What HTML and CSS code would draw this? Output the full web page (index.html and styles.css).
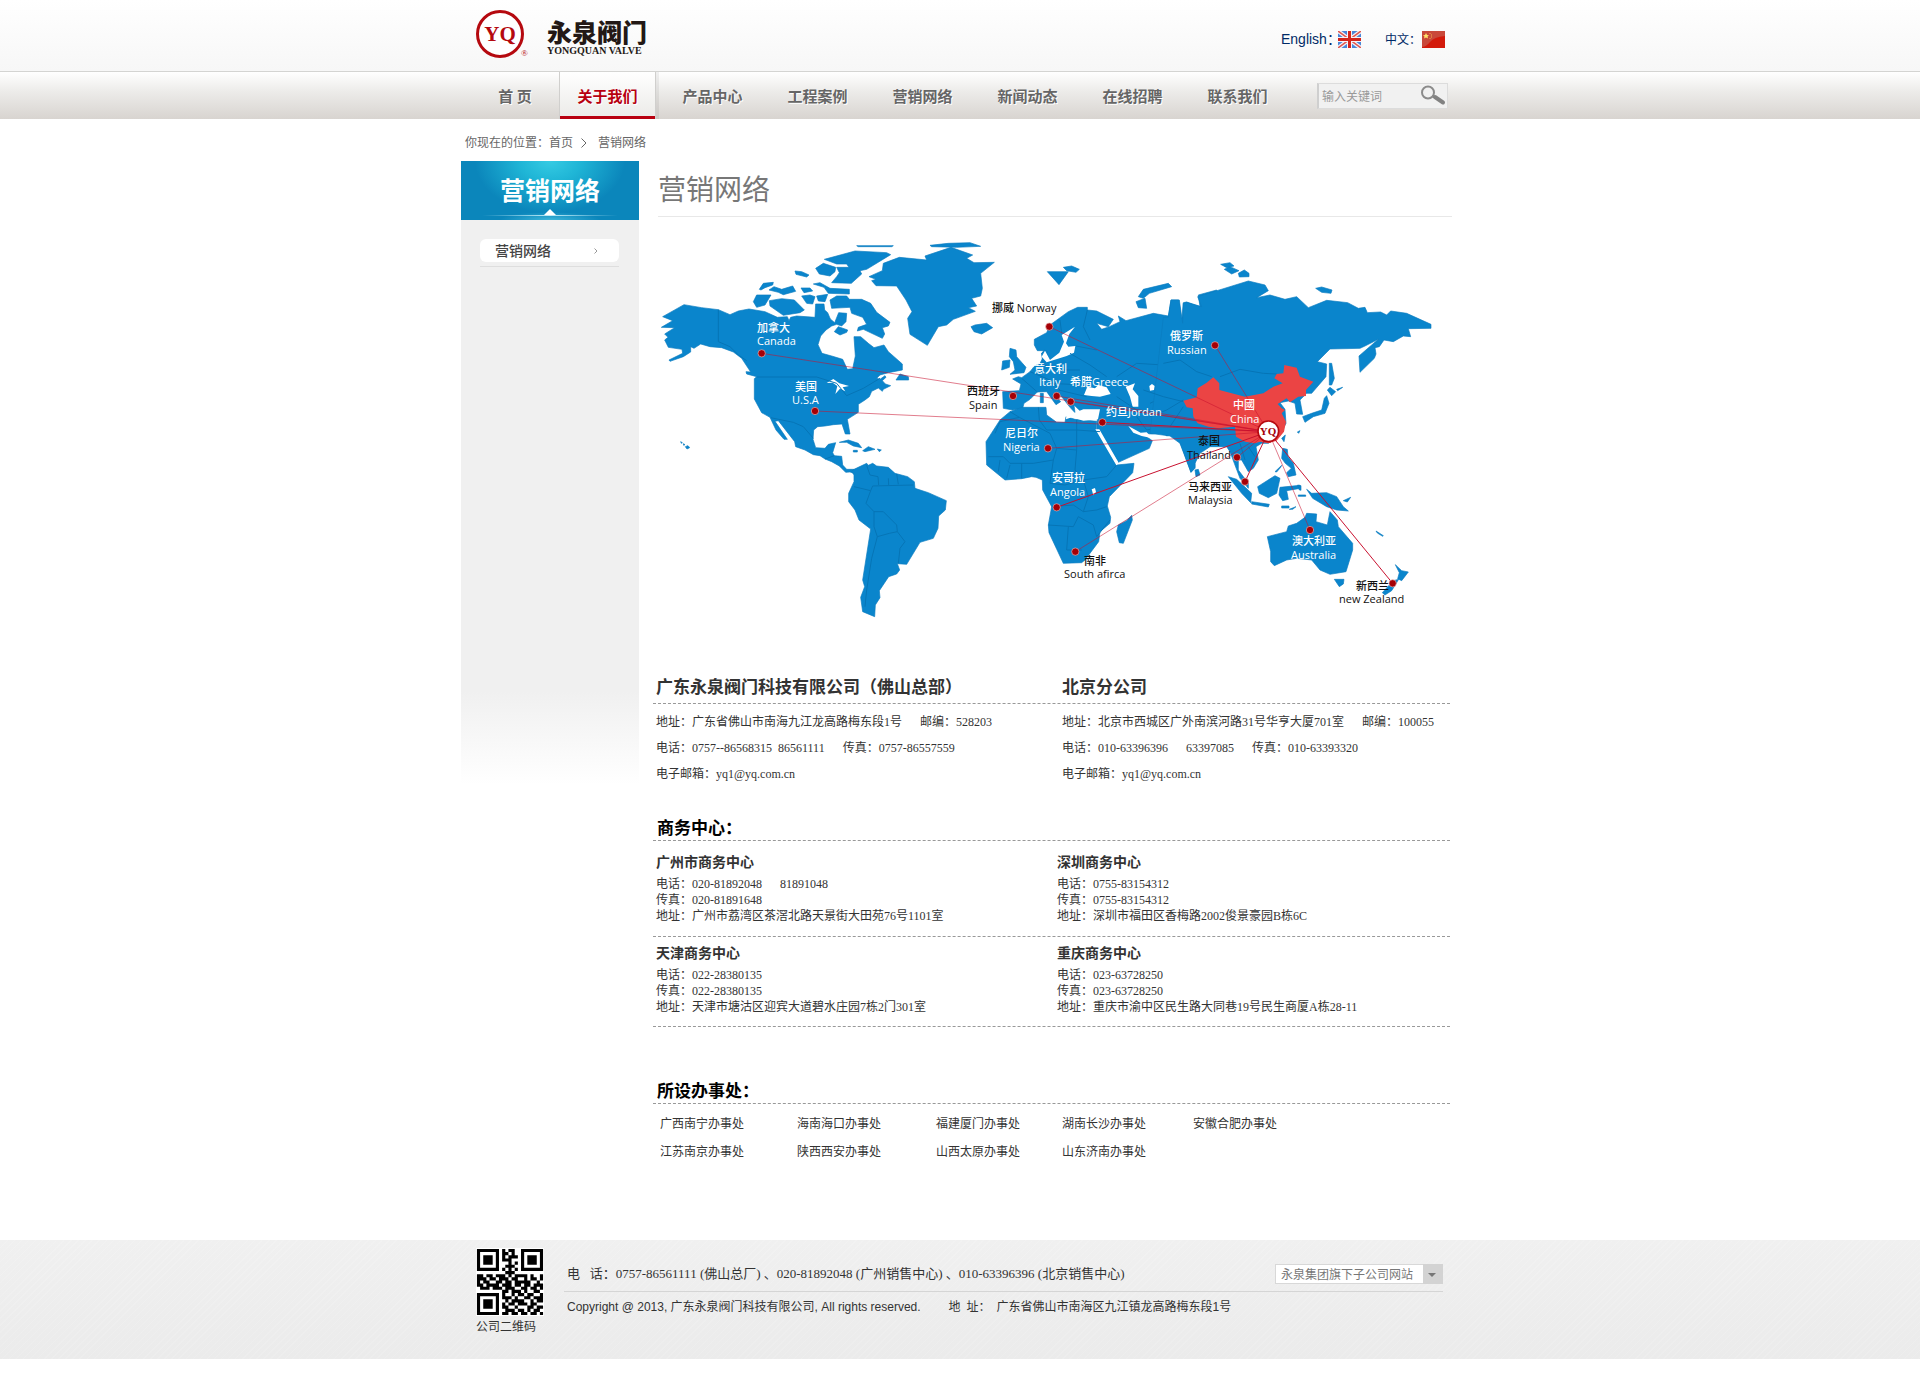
FILE: index.html
```html
<!DOCTYPE html>
<html lang="zh-CN">
<head>
<meta charset="utf-8">
<title>营销网络 - 永泉阀门</title>
<link rel="stylesheet" href="styles.css">
</head>
<body>
<header class="top">
  <div class="wrap top-in">
    <a class="logo" href="#" aria-label="永泉阀门">
      <svg class="logo-mark" viewBox="0 0 56 52" width="56" height="52">
        <ellipse cx="25" cy="26" rx="22.500" ry="22.500" fill="#fff" stroke="#b5090f" stroke-width="3"/>
        <text class="mark-text" x="25" y="33" text-anchor="middle">YQ</text>
        <text class="mark-reg" x="46" y="48">®</text>
      </svg>
      <span class="logo-name"><span class="logo-cn">永泉阀门</span><span class="logo-en">YONGQUAN VALVE</span></span>
    </a>
    <div class="langs">
      <a class="lang lang-en" href="#">English：</a>
      <svg class="flag" viewBox="0 0 23 17" width="23" height="17">
        <rect width="23" height="17" fill="#4a86d8"/>
        <path d="M0 0L23 17M23 0L0 17" stroke="#f3f3f8" stroke-width="4"/>
        <path d="M0 0L23 17M23 0L0 17" stroke="#e0584f" stroke-width="1.500"/>
        <path d="M11.500 0V17M0 8.500H23" stroke="#f3f3f8" stroke-width="5"/>
        <path d="M11.500 0V17M0 8.500H23" stroke="#d3251c" stroke-width="3"/>
      </svg>
      <a class="lang lang-cn" href="#">中文：</a>
      <svg class="flag" viewBox="0 0 23 17" width="23" height="17">
        <rect width="23" height="17" fill="#d31a0b"/>
        <path d="M0 0H23V5Q12 6 8 11T0 16Z" fill="#c9483a"/>
        <path d="M4 2l1 2 2 .2-1.500 1.300.5 2-2-1.100-2 1.100.5-2L1 4.200 3 4z" fill="#ffe36b"/>
        <path d="M7.500 2.500h1M9 4h1M9 6h1M7.500 7.500h1" stroke="#f3b04a"/>
      </svg>
    </div>
  </div>
</header>
<nav class="nav">
  <div class="wrap nav-in">
    <ul class="menu">
      <li class="home"><a href="#">首 页</a></li>
      <li class="on"><a href="#">关于我们</a></li>
      <li><a href="#">产品中心</a></li>
      <li><a href="#">工程案例</a></li>
      <li><a href="#">营销网络</a></li>
      <li><a href="#">新闻动态</a></li>
      <li><a href="#">在线招聘</a></li>
      <li><a href="#">联系我们</a></li>
    </ul>
    <form class="search">
      <input type="text" placeholder="输入关键词" aria-label="输入关键词">
      <button type="button" aria-label="搜索">
        <svg viewBox="0 0 26 22" width="26" height="22"><circle cx="8" cy="8.500" r="6" fill="none" stroke="#8b8b8b" stroke-width="2"/><path d="M12 12l3 2" stroke="#8b8b8b" stroke-width="2"/><path d="M15 13l8 5.500" stroke="#828282" stroke-width="4" stroke-linecap="round"/></svg>
      </button>
    </form>
  </div>
</nav>

<div class="wrap crumb">你现在的位置：<a href="#">首页</a><svg viewBox="0 0 6 10" width="6" height="10"><path d="M.5.5l4.500 4.500L.5 9.500" fill="none" stroke="#666"/></svg><a href="#">营销网络</a></div>

<div class="wrap page">
  <aside class="side">
    <h2 class="side-head">营销网络</h2>
    <ul class="side-menu"><li><a href="#">营销网络<svg viewBox="0 0 4 6" width="4" height="6"><path d="M.5.5L3 3 .5 5.500" fill="none" stroke="#999"/></svg></a></li></ul>
  </aside>
  <main class="main">
    <h1 class="title">营销网络</h1>
    <svg class="map" viewBox="8 0 794 400" role="img" aria-label="营销网络">
      <g transform="scale(.33333)">
        <g class="land">
          <path d="M38 260L102 224 155 233 205 239 240 254 265 243 297 237 345 245 382 262 412 260 417 272 422 262 440 258 495 262 497 222 522 222 524 240 533 248 541 267 554 278 566 248 590 250 588 275 575 288 560 283 545 288 528 300 512 318 504 344 516 370 545 378 578 388 592 418 608 416 616 378 612 320 632 320 655 340 672 353 702 345 715 365 757 402 757 420 715 428 690 435 680 445 690 448 705 437 708 442 697 452 706 462 722 467 700 478 697 484 685 474 665 484 658 500 645 510 625 523 625 547 592 568 600 612 586 612 576 582 550 584 525 588 503 590 491 600 489 628 497 653 525 655 535 643 557 638 548 668 553 677 575 679 578 705 590 718 612 718 612 730 600 726 587 727 568 708 545 695 525 687 510 677 490 674 465 660 437 650 434 635 385 572 375 574 412 628 402 628 378 600 360 562 335 548 313 507 313 446 320 440 290 432 288 425 302 426 275 385 250 366 215 353 180 350 152 342 132 355 122 350 122 366 100 380 60 394 57 390 98 370 96 358 55 352 44 330 54 322 44 312 74 293 34 292 68 272Z"/>
          <path d="M605 724L612 718 650 700 655 706 668 700 680 708 715 712 735 730 773 740 793 755 795 775 835 788 889 812 886 840 866 858 864 895 850 925 810 937 770 1003 742 1001 749 1020 740 1032 716 1040 688 1082 690 1103 676 1125 674 1160 638 1145 632 1102 644 1070 638 1050 662 897 627 870 615 840 596 815 596 790 612 755 612 735Z"/>
          <path d="M657 140L697 122 700 100 748 82 830 90 825 78 903 52 968 75 950 85 972 98 1033 97 992 130 997 175 992 198 965 205 980 228 955 233 976 244 910 268 890 285 865 290 832 346 780 313 773 265 786 245 768 210 740 168 678 167 665 152 678 148Z"/>
          <path d="M840 46L895 40 960 38 992 49 920 52 845 50ZM620 47L730 47 725 50H625Z"/>
          <path d="M523 88L615 63 710 68 722 74 650 118 630 122 635 132 604 160 545 158 560 140 568 128 560 112 597 112 590 102 560 102ZM497 115L520 100 557 112 555 125 540 138 508 132ZM435 123L455 125 477 135 470 141 438 133ZM328 178L340 160 370 157 368 165 345 173 333 180ZM357 180L372 170 395 178 428 168 437 184 400 194 385 187ZM453 174L480 174 488 183 462 188ZM490 162L510 158 540 175 598 178 598 192 535 190 522 172ZM310 215L320 195 363 195 345 225 320 232ZM358 212L395 206 433 210 463 240 450 248 400 256 360 228ZM455 198L480 195 495 200 488 222 470 220ZM500 198L533 193 525 215 505 213Z"/>
          <path d="M540 210L560 198 590 198 598 208 635 208 662 220 680 247 720 277 715 288 697 293 704 312 697 325 640 298 622 303 625 292 650 283 638 262 605 250 600 232 545 235ZM553 305L565 290 593 300 590 307 570 315ZM738 450L750 432 775 440 776 450ZM963 290L975 285 1010 280 1028 293 995 312 972 305Z"/>
          <path d="M568 637L595 630 625 640 635 653 610 648 590 637ZM638 662L655 650 675 658 645 665ZM610 661h12v5h-12ZM682 657l12 3-6 5ZM92 635l5 3-3 2ZM100 641l5 3-4 2ZM106 650l8-3 5 6-8 4Z"/>
        </g>
        <path class="water" d="M530 459L550 447 568 460 597 468 578 472 586 484 570 476 556 492 562 468 548 458Z"/>
        <path class="border" d="M205 239V335L240 350 265 375 290 392M320 441H500L560 460 590 497 640 475 690 445M362 563L430 577 460 590 490 625M553 677L525 687M650 706L660 735 684 740 686 765M612 770L662 782 668 768 790 765M715 745L716 765M740 732L745 763M662 782L648 820 672 845 700 845 740 885 742 905 718 910 682 920 672 890 672 845M742 905L765 935 750 955 745 1000M682 920L665 985 650 1080 645 1130"/>
        <g transform="translate(900 0)">
          <g class="land">
            <path d="M253 328L290 308 300 285 355 245 383 232 412 232 412 240 440 243 490 268 475 290 440 280 455 298 478 290 510 275 505 258 528 272 610 250 655 258 663 210 686 210 695 275 700 218 710 216 750 230 745 195 800 180 800 610 735 680 735 712 723 727 695 650 688 632 665 612 650 618 640 608 605 612 575 610 607 632 598 655 505 697 440 597 444 540 390 542 372 525 375 548 360 532 335 500 315 495 332 515 318 524 290 485 262 486 240 508 222 520 218 535 188 540 160 535 158 485 208 482 213 462 188 447 205 440 215 443 240 425 252 410 270 400 278 385 275 370 285 362 262 362 253 345Z"/>
            <path d="M180 545L215 532 288 532 290 555 320 577 345 577 348 560 375 568 440 574 438 597 500 705 552 700 548 728 478 800 472 828 482 862 480 880 450 905 446 935 405 990 395 998 340 1000 297 908 295 885 305 830 278 780 277 750 258 742 245 740 215 746 165 750 110 705 108 635 150 570Z"/>
            <path d="M545 856L547 870 520 940 508 938 500 905 505 885 530 872ZM180 355L198 360 200 380 228 412 222 428 180 433 195 420 190 395 178 380ZM158 393L180 390 178 412 155 420ZM292 125L355 125 327 164ZM340 112L365 108 388 118 378 127 350 122ZM565 200L580 178 655 160 665 170 598 190 580 205ZM558 215L585 205 590 235 565 233ZM735 720L745 718 750 735 738 740ZM271 490h9v28h-9ZM275 370l8-10 10 4-3 26-12 8Z"/>
          </g>
          <path class="water" d="M375 290L335 315 342 335 328 368 300 390 285 362 275 380 290 397 350 378 372 368 376 348 355 350 348 340 358 312ZM402 495L412 470 435 475 445 465 470 472 482 492 450 500 425 498ZM527 470L555 460 548 478 565 498 565 530 548 530 540 500ZM375 548L400 538 450 538 444 568 400 572 365 562 348 568 350 548ZM436 598L448 598 505 697 500 707ZM535 588L572 608 590 607 607 625 575 618 550 608ZM425 778l10-4 3 12-8 10ZM598 468l8-6 8 6-2 12-12 2Z"/>
          <path class="border" d="M180 545L208 562 150 575 135 610M208 562L300 610 320 655 310 690 250 700 180 700 160 680 115 680M265 532L268 570 290 600M290 600L380 600 450 605M380 570V660L320 655M380 660L375 720 400 750 470 740 500 705M310 690L300 760 345 765 400 750M305 830L370 825 400 845 440 840 470 830M295 885L370 890 385 860 430 885 440 920 480 870M355 890L350 960 395 960M400 750L415 800 400 845M215 700V745M180 705L170 745M150 690L145 725M240 425L300 450 330 480M215 445L262 486M360 370L420 405 470 440M378 348L440 360M330 270L335 310M412 240L400 290 420 330M300 460L400 465M325 480L410 500M270 400L320 420 390 420M500 440L560 400 640 405 700 420M500 500L560 540 640 560 690 580M600 520L640 500 720 510M560 560L590 600 640 590 680 570"/>
        </g>
        <g transform="translate(1440 0)">
          <g class="land">
            <path d="M100 262L115 262 123 210 148 210 158 280 160 220 170 217 215 230 203 200 355 153 405 165 415 182 380 203 420 195 465 208 500 200 535 233 590 211 653 218 685 235 705 232 712 248 752 246 770 255 782 243 830 250 903 283 903 295 835 296 842 320 820 318 790 335 762 330 748 350 735 353 738 372 733 385 690 427 687 378 725 345 745 328 705 348 690 355 600 357 562 395 590 402 588 440 545 490 530 490 510 510 518 553 500 552 495 520 475 513 450 518 465 538 468 580 450 615 415 640 395 640 378 650 385 690 370 715 355 725 335 690 325 690 325 720 355 760 355 775 330 745 313 700 300 665 290 650 240 650 210 670 195 700 195 715 183 727 150 640 120 618 60 610Z"/>
            <path d="M598 400L605 400 613 445 605 465 598 465ZM592 480L600 472 617 485 605 497ZM590 497L597 520 585 550 550 560 525 577 518 560 545 550 575 540 583 505ZM620 478l18-6-15 10ZM502 606l8-4-4 8ZM455 625L466 615 462 635ZM458 655L472 658 474 680 490 700 498 735 475 740 470 728 484 715 466 700 455 685ZM435 725L455 706 452 712 440 726ZM295 740L320 748 365 790 362 818 335 790ZM365 815L418 823 415 831 365 822ZM383 770L435 737 450 745 440 790 415 803 388 790ZM450 772L510 766 505 776 470 782 475 808 458 812 447 795ZM455 828h22v6h-22ZM478 838l20-8-10 8ZM503 765l10 2v14l-6-2ZM505 795h22v4h-22ZM530 778L545 790 590 788 620 800 640 830 655 843 620 840 590 830 548 805ZM640 812l22-10-10 14Z"/>
            <path d="M272 103L300 98 312 108 290 113ZM283 118L300 110 327 122 305 132ZM325 130L343 120 357 130 357 140 328 141ZM557 175L575 171 606 180 603 190 575 187Z"/>
            <path d="M412 920L470 905 475 888 500 880 525 862 530 850 560 852 558 875 592 885 600 845 622 870 625 890 668 940 668 960 648 1025 600 1033 570 1020 545 990 500 985 470 990 433 1007 422 995 422 965ZM613 1048L642 1048 640 1062 628 1070ZM796 1004L815 1022 835 1026 815 1052 803 1046 808 1028ZM790 1052L806 1048 785 1082 765 1095 757 1088ZM738 903l22 14-2 2-16-10Z"/>
          </g>
          <path class="border" d="M100 400L150 390 200 425 245 440M270 440L330 418 400 430 440 432M330 640L345 690M355 650L375 680M40 480L100 500 160 515M60 560L110 540 160 510M120 590L160 530"/>
          <path class="china" d="M160 512L200 502 203 475 230 458 250 442 268 460 268 480 345 500 400 490 430 470 458 460 433 445 440 432 460 430 463 405 500 413 510 440 550 455 528 480 528 498 505 500 480 517 470 505 443 522 455 535 465 540 455 550 468 575 462 605 440 632 415 640 390 635 375 640 345 635 318 620 315 590 265 595 235 590 203 580 190 560 188 535 170 532Z"/>
        </g>
        <path class="route" d="M335 370L1855 605M495 543L1855 605M1198 290L1855 605M1220 498L1855 605M1262 515L1855 605M1194 655L1855 605M1276 965L1855 605M1695 346L1855 605M1761 682L1855 605M1980 900L1855 605"/>
        <path class="route strong" d="M1357 577L1855 605M1220 832L1855 605M1785 755L1855 605M2228 1060L1855 605"/>
        <g class="pins">
          <circle cx="335" cy="370" r="11"/><circle cx="495" cy="543" r="11"/><circle cx="1198" cy="290" r="11"/><circle cx="1089" cy="498" r="11"/><circle cx="1220" cy="498" r="11"/><circle cx="1262" cy="515" r="11"/><circle cx="1357" cy="577" r="11"/><circle cx="1194" cy="655" r="11"/><circle cx="1220" cy="832" r="11"/><circle cx="1276" cy="965" r="11"/><circle cx="1695" cy="346" r="11"/><circle cx="1761" cy="682" r="11"/><circle cx="1785" cy="755" r="11"/><circle cx="1980" cy="900" r="11"/><circle cx="2228" cy="1060" r="11"/>
        </g>
        <circle class="hub" cx="1855" cy="604" r="31"/>
      </g>
      <text class="hub-text" x="618" y="205" text-anchor="middle">YQ</text>
      <g class="names light">
        <text x="107" y="102">加拿大</text><text x="107" y="115">Canada</text>
        <text x="145" y="161">美国</text><text x="142" y="174">U.S.A</text>
        <text x="384" y="143">意大利</text><text x="389" y="156">Italy</text>
        <text x="420" y="156">希腊Greece</text>
        <text x="456" y="186">约旦Jordan</text>
        <text x="355" y="207">尼日尔</text><text x="353" y="221">Nigeria</text>
        <text x="402" y="252">安哥拉</text><text x="400" y="266">Angola</text>
        <text x="520" y="110">俄罗斯</text><text x="517" y="124">Russian</text>
        <text x="583" y="179">中國</text><text x="580" y="193">China</text>
        <text x="642" y="315">澳大利亚</text><text x="641" y="329">Australia</text>
      </g>
      <g class="names dark">
        <text x="342" y="82">挪威 Norway</text>
        <text x="317" y="165">西班牙</text><text x="319" y="179">Spain</text>
        <text x="434" y="335">南非</text><text x="414" y="348">South afirca</text>
        <text x="548" y="215">泰国</text><text x="537" y="229">Thailand</text>
        <text x="538" y="261">马来西亚</text><text x="538" y="274">Malaysia</text>
        <text x="706" y="360">新西兰</text><text x="689" y="373">new Zealand</text>
      </g>
    </svg>

    <section class="contacts">
      <div class="pair head-row"><h2>广东永泉阀门科技有限公司（佛山总部）</h2><h2>北京分公司</h2></div>
      <div class="pair contact-body">
        <div>
          <p><span>地址：广东省佛山市南海九江龙高路梅东段1号</span><span>邮编：528203</span></p>
          <p><span>电话：0757--86568315&ensp;86561111</span><span>传真：0757-86557559</span></p>
          <p>电子邮箱：yq1@yq.com.cn</p>
        </div>
        <div>
          <p><span>地址：北京市西城区广外南滨河路31号华亨大厦701室</span><span>邮编：100055</span></p>
          <p><span>电话：010-63396396</span><span>63397085</span><span>传真：010-63393320</span></p>
          <p>电子邮箱：yq1@yq.com.cn</p>
        </div>
      </div>
    </section>

    <section class="centers">
      <h2 class="bar">商务中心：</h2>
      <div class="center-row">
        <div><h3>广州市商务中心</h3><p><span>电话：020-81892048</span><span>81891048</span></p><p>传真：020-81891648</p><p>地址：广州市荔湾区茶滘北路天景街大田苑76号1101室</p></div>
        <div><h3>深圳商务中心</h3><p>电话：0755-83154312</p><p>传真：0755-83154312</p><p>地址：深圳市福田区香梅路2002俊景豪园B栋6C</p></div>
      </div>
      <div class="center-row tight">
        <div><h3>天津商务中心</h3><p>电话：022-28380135</p><p>传真：022-28380135</p><p>地址：天津市塘沽区迎宾大道碧水庄园7栋2门301室</p></div>
        <div><h3>重庆商务中心</h3><p>电话：023-63728250</p><p>传真：023-63728250</p><p>地址：重庆市渝中区民生路大同巷19号民生商厦A栋28-11</p></div>
      </div>
    </section>

    <section class="offices">
      <h2 class="bar">所设办事处：</h2>
      <ul>
        <li>广西南宁办事处</li><li>海南海口办事处</li><li>福建厦门办事处</li><li>湖南长沙办事处</li><li>安徽合肥办事处</li>
        <li>江苏南京办事处</li><li>陕西西安办事处</li><li>山西太原办事处</li><li>山东济南办事处</li>
      </ul>
    </section>
  </main>
</div>

<footer class="foot">
  <div class="wrap foot-in">
    <figure class="qr">
      <svg viewBox="-.3 -.3 21.600 21.600" width="68" height="68" role="img" aria-label="公司二维码">
        <rect x="-.3" y="-.3" width="21.600" height="21.600" fill="#fff"/>
        <path fill="none" stroke="#000" d="M.5.5h6v6h-6zM14.500.5h6v6h-6zM.5 14.500h6v6h-6z"/>
        <path d="M2 2h3v3H2zM16 2h3v3h-3zM2 16h3v3H2z"/>
        <path fill="none" stroke="#000" d="M8 .5h1m1 0h2M8 1.500h2m1 0h1M8 2.500h1m1 0h3M8 3.500h3M10 4.500h1m1 0h1M9 5.500h3M8 6.500h1m1 0h1m1 0h1M9 7.500h3M0 8.500h2m1 0h2m1 0h3m1 0h1m1 0h4m1 0h1m2 0h1M0 9.500h3m1 0h2m1 0h3m1 0h2m2 0h1m1 0h2m1 0h1M0 10.500h1m1 0h2m2 0h2m1 0h2m1 0h5m2 0h1M0 11.500h2m1 0h4m1 0h3m1 0h2m1 0h2m1 0h3M1 12.500h3m1 0h3m1 0h3m2 0h2m1 0h2m1 0h1M8 13.500h2m1 0h3m1 0h1m2 0h2M8 14.500h1m2 0h1m1 0h2m1 0h2m2 0h1M8 15.500h3m1 0h1m2 0h2m1 0h3M9 16.500h1m1 0h4m2 0h1m1 0h2M8 17.500h1m1 0h2m1 0h3m1 0h2M8 18.500h2m2 0h1m3 0h2m1 0h2M9 19.500h3m1 0h2m1 0h1m1 0h2M8 20.500h2m1 0h2m1 0h2m1 0h2m1 0h1"/>
      </svg>
      <figcaption>公司二维码</figcaption>
    </figure>
    <div class="foot-info">
      <div class="foot-line">
        <p>电&ensp; 话：0757-86561111 (佛山总厂) 、020-81892048 (广州销售中心) 、010-63396396 (北京销售中心)</p>
        <div class="drop"><select aria-label="永泉集团旗下子公司网站"><option>永泉集团旗下子公司网站</option></select></div>
      </div>
      <p class="copy"><span>Copyright @ 2013, 广东永泉阀门科技有限公司, All rights reserved.</span><span>地&ensp;址：&ensp;广东省佛山市南海区九江镇龙高路梅东段1号</span></p>
    </div>
  </div>
</footer>
</body>
</html>
```

FILE: styles.css
```css
* { box-sizing: border-box; margin: 0; padding: 0; }
body {
  background: #fff;
  color: #333;
  font: 12px/16px "Liberation Serif", "Noto Sans CJK SC", serif;
}
a { color: inherit; text-decoration: none; }
ul { list-style: none; }
.wrap { max-width: 1000px; margin: 0 auto; }

/* header */
.top { background: linear-gradient(#fff, #f7f7f7); border-bottom: 1px solid #d4d4d2; }
.top-in { display: flex; justify-content: space-between; min-height: 71px; padding: 8px 15px 0; }
.logo { display: flex; }
.logo-mark { flex: none; }
.mark-text { font: bold 21px "Liberation Serif", serif; fill: #b5090f; }
.mark-reg { font: 9px "Liberation Serif", serif; fill: #b5090f; }
.logo-name { display: flex; flex-direction: column; padding: 8px 0 0 16px; }
.logo-cn { font: 900 25px/30px "Noto Sans CJK SC", sans-serif; color: #231815; }
.logo-en { font: bold 10px/10px "Liberation Serif", serif; color: #231815; white-space: nowrap; }
.langs { display: flex; align-items: center; height: 62px; color: #002a66; }
.lang-en { font: 14px/20px "Liberation Sans", "Noto Sans CJK SC", sans-serif; width: 57px; white-space: nowrap; }
.lang-cn { font: 12px/20px "Noto Sans CJK SC", sans-serif; margin: 0 1px 0 24px; }
.flag { flex: none; }

/* navigation */
.nav { background: linear-gradient(#fff, #edecea 40%, #d8d4d0); }
.nav-in { display: flex; justify-content: space-between; align-items: center; padding: 0 12px 0 20px; }
.menu { display: flex; gap: 10px; }
.menu a {
  display: block; width: 95px; height: 47px;
  font: bold 15px/47px "Noto Sans CJK SC", sans-serif;
  color: #666; text-align: center; text-shadow: 1px 1px 0 #fff;
}
.menu .home a { width: 70px; }
.menu .on a {
  color: #b80010;
  background: linear-gradient(#fff, #ecebe9);
  border-bottom: 3px solid #b80010;
  box-shadow: -1px 0 0 #d0cfcd, 1px 0 0 #d0cfcd, 4px 0 0 #0000000f;
}
.search { display: flex; width: 131px; height: 26px; background: #f1f1f1; border: 1px solid #dcdcdc; border-left: 2px solid #cfcfcf; }
.search input {
  flex: 1; min-width: 0; border: 0; background: none; padding-left: 3px;
  font: 12px/20px "Noto Sans CJK SC", sans-serif; color: #666;
}
.search input::placeholder { color: #999; opacity: 1; }
.search button { width: 28px; border: 0; background: none; }

.crumb { display: flex; align-items: center; min-height: 42px; padding: 5px 5px 0; color: #666; }
.crumb svg { margin: 0 11px 0 8px; }

/* page */
.page { display: grid; grid-template-columns: 178px minmax(0, 1fr); gap: 14px; align-items: start; padding: 0 8px 0 1px; }
.side { min-height: 624px; background: linear-gradient(#f0f0f0 85%, #fff); }
.side-head {
  position: relative;
  height: 59px; color: #fff; text-align: center;
  font: bold 25px/56px "Noto Sans CJK SC", sans-serif;
  background:
    linear-gradient(90deg, transparent 12%, #bfeaf6 50%, transparent 88%) 0 54px / 100% 1px no-repeat,
    radial-gradient(ellipse 50px 8px at 50% 59px, #3db5d9, transparent),
    radial-gradient(ellipse 75px 52px at 50% 0, #35cbe3, #1fb5d6 40%, transparent),
    #0b86bb;
}
.side-head::after {
  content: ""; position: absolute; left: 50%; top: 48px; margin-left: -6px;
  border: 6px solid transparent; border-top: 0; border-bottom-color: #fff;
}
.side-menu { padding: 19px 20px 0 19px; }
.side-menu li { padding-bottom: 4px; border-bottom: 1px solid #dedede; }
.side-menu a {
  display: flex; justify-content: space-between; align-items: center;
  padding: 0 21px 0 15px; background: #fff; border-radius: 6px;
  font: 500 14px/23px "Noto Sans CJK SC", sans-serif; color: #444;
}
.title {
  margin-left: 5px; border-bottom: 1px solid #e8e8e8;
  font: 28px/55px "Noto Sans CJK SC", sans-serif; color: #777;
}
.map { display: block; width: calc(100% - 5px); height: auto; margin: 13px 0 0 5px; }
.land { fill: #0a85cc; stroke: #0a7cc0; stroke-width: 2; }
.water { fill: #fff; }
.border { fill: none; stroke: #0674b6; stroke-width: 3; }
.china { fill: #eb4444; }
.route { fill: none; stroke: #c8102e; stroke-opacity: .55; stroke-width: 3; }
.route.strong { stroke-opacity: 1; }
.pins circle { fill: #a50006; stroke: #e9b4b4; stroke-width: 2; }
.hub { fill: #fff; stroke: #b5090f; stroke-width: 5; }
.hub-text { font: bold 11px "Liberation Serif", serif; fill: #a50006; }
.names { font: 500 11px "Open Sans", "Noto Sans CJK SC", sans-serif; }
.light { fill: #fff; }
.dark { fill: #111; }

/* contact blocks */
.contacts, .centers, .offices { margin-right: 2px; }
.contacts { margin-top: 39px; }
h2, h3 { font-family: "Noto Sans CJK SC", sans-serif; font-weight: bold; }
.pair { display: grid; grid-template-columns: 406px minmax(0, 1fr); padding-left: 3px; white-space: nowrap; }
.head-row { border-bottom: 1px dashed #999; }
.head-row h2 { font-size: 17px; line-height: 34px; }
.contact-body { padding-top: 5px; }
.contact-body p { line-height: 26px; }
.contacts p, .centers p { display: flex; gap: 18px; }
.centers { margin-top: 27px; }
.bar { padding-left: 4px; border-bottom: 1px dashed #999; font-size: 17px; line-height: 26px; color: #000; }
.center-row {
  display: grid; grid-template-columns: 401px minmax(0, 1fr);
  padding: 9px 0 12px 3px; border-bottom: 1px dashed #999; white-space: nowrap;
}
.center-row.tight { padding-top: 4px; padding-bottom: 11px; }
.center-row h3 { margin-bottom: 4px; font-size: 14px; line-height: 22px; }
.offices { margin-top: 50px; }
.offices ul { display: grid; grid-template-columns: 137px 139px 126px 131px auto; padding: 6px 0 0 7px; line-height: 28px; }

/* footer */
.foot {
  margin-top: 74px; min-height: 119px;
  background:
    repeating-linear-gradient(135deg, rgba(255, 255, 255, .12) 0 1px, transparent 1px 5px),
    linear-gradient(#f0f0f0, #ebebeb);
}
.foot-in { display: flex; gap: 20px; padding: 8px 17px 0 16px; }
.qr svg { display: block; }
.qr figcaption { padding-top: 3px; white-space: nowrap; }
.foot-info { flex: 1; }
.foot-line { display: flex; justify-content: space-between; align-items: center; height: 44px; padding: 8px 0 0 3px; border-bottom: 1px solid #d5d5d5; white-space: nowrap; }
.foot-line p { font-size: 13px; }
.drop { position: relative; width: 168px; height: 20px; }
.drop select {
  width: 100%; height: 20px; padding: 0 20px 0 5px;
  appearance: none; border: 1px solid #d8d8d8; border-radius: 0; background: #fff;
  font: 12px/16px "Noto Sans CJK SC", sans-serif; color: #777;
}
.drop::after {
  content: ""; position: absolute; right: 0; top: 0; width: 20px; height: 20px;
  background: #d3d3d3;
  pointer-events: none;
}
.drop::before {
  content: ""; position: absolute; z-index: 1; right: 7px; top: 9px;
  border: 4px solid transparent; border-bottom: 0; border-top-color: #777;
  pointer-events: none;
}
.copy { display: flex; gap: 28px; padding: 7px 0 0 3px; font-family: "Liberation Sans", "Noto Sans CJK SC", sans-serif; white-space: nowrap; }
```
